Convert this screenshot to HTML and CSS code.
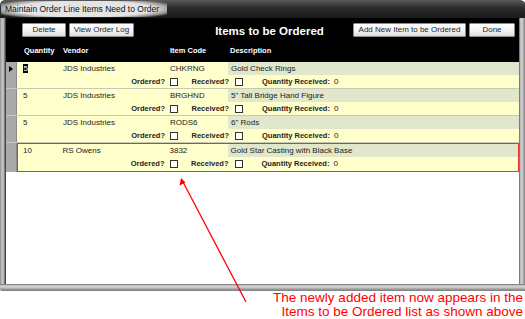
FILE: index.html
```html
<!DOCTYPE html>
<html>
<head>
<meta charset="utf-8">
<link rel="stylesheet" href="styles.css">
</head>
<body>
<div class="page">
  <div class="window">
    <div class="titlebar"><span class="title-glow">Maintain Order Line Items Need to Order</span></div>
    <div class="frame-mid">
      <div class="frame-left"></div>
      <div class="content">
        <div class="header">
          <div class="toolbar">
            <div class="btn-group">
              <button class="btn btn-delete">Delete</button>
              <button class="btn btn-log">View Order Log</button>
            </div>
            <div class="form-title">Items to be Ordered</div>
            <div class="btn-group">
              <button class="btn btn-add">Add New Item to be Ordered</button>
              <button class="btn btn-done">Done</button>
            </div>
          </div>
          <div class="col-heads">
            <span class="ch ch-qty">Quantity</span>
            <span class="ch ch-vendor">Vendor</span>
            <span class="ch ch-code">Item Code</span>
            <span class="ch ch-desc">Description</span>
          </div>
        </div>
        <div class="rows">
          <div class="row">
            <div class="selector"><span class="arrow"></span></div>
            <div class="rbody">
              <div class="line top">
                <span class="c-qty"><span class="sel">5</span></span>
                <span class="c-vendor">JDS Industries</span>
                <span class="c-code">CHKRNG</span>
                <span class="c-desc">Gold Check Rings</span>
              </div>
              <div class="line bottom">
                <span class="lbl l-ord">Ordered?</span><span class="cb"></span>
                <span class="lbl l-rec">Received?</span><span class="cb cb2"></span>
                <span class="lbl l-qr">Quantity Received:</span><span class="qr">0</span>
              </div>
            </div>
          </div>
          <div class="row">
            <div class="selector"></div>
            <div class="rbody">
              <div class="line top">
                <span class="c-qty">5</span>
                <span class="c-vendor">JDS Industries</span>
                <span class="c-code">BRGHND</span>
                <span class="c-desc">5" Tall Bridge Hand Figure</span>
              </div>
              <div class="line bottom">
                <span class="lbl l-ord">Ordered?</span><span class="cb"></span>
                <span class="lbl l-rec">Received?</span><span class="cb cb2"></span>
                <span class="lbl l-qr">Quantity Received:</span><span class="qr">0</span>
              </div>
            </div>
          </div>
          <div class="row">
            <div class="selector"></div>
            <div class="rbody">
              <div class="line top">
                <span class="c-qty">5</span>
                <span class="c-vendor">JDS Industries</span>
                <span class="c-code">RODS6</span>
                <span class="c-desc">6" Rods</span>
              </div>
              <div class="line bottom">
                <span class="lbl l-ord">Ordered?</span><span class="cb"></span>
                <span class="lbl l-rec">Received?</span><span class="cb cb2"></span>
                <span class="lbl l-qr">Quantity Received:</span><span class="qr">0</span>
              </div>
            </div>
          </div>
          <div class="row row-new">
            <div class="selector"></div>
            <div class="rbody highlight">
              <div class="line top">
                <span class="c-qty">10</span>
                <span class="c-vendor">RS Owens</span>
                <span class="c-code">3832</span>
                <span class="c-desc">Gold Star Casting with Black Base</span>
              </div>
              <div class="line bottom">
                <span class="lbl l-ord">Ordered?</span><span class="cb"></span>
                <span class="lbl l-rec">Received?</span><span class="cb cb2"></span>
                <span class="lbl l-qr">Quantity Received:</span><span class="qr">0</span>
              </div>
            </div>
          </div>
        </div>
        <div class="blank"></div>
      </div>
      <div class="frame-right"></div>
    </div>
    <div class="frame-bottom"></div>
  </div>
  <div class="note">The newly added item now appears in the<br>Items to be Ordered list as shown above</div>
  <svg class="pointer" width="525" height="319" viewBox="0 0 525 319">
    <line x1="246" y1="302" x2="183" y2="182" stroke="#ff0000" stroke-width="1.3"/>
    <polygon points="181,178 179.5,185.5 185.5,182.5" fill="#ff0000"/>
  </svg>
</div>
</body>
</html>
```

FILE: styles.css
```css
* { box-sizing: border-box; }
html, body { margin: 0; padding: 0; background: #fff; }
body { width: 525px; height: 319px; overflow: hidden; font-family: "Liberation Sans", Arial, sans-serif; }
.page { position: relative; width: 525px; height: 319px; }

.window { width: 526px; height: 291px; display: flex; flex-direction: column; }
.titlebar {
  height: 18px;
  background: linear-gradient(#5a5a5a, #2b2b2b 45%, #1a1a1a);
  border-top-left-radius: 5px; border-top-right-radius: 6px;
  display: flex; align-items: center; padding-left: 1px;
}
.title-glow {
  font-size: 8.5px; color: #111; padding: 3px 8px 3px 4px;
  background: radial-gradient(ellipse 60% 70% at center, #e4e4e4 70%, rgba(190,190,190,0.7) 88%, rgba(100,100,100,0) 100%);
  line-height: 10px;
}
.frame-mid { flex: 1; display: flex; min-height: 0; }
.frame-left { width: 6px; background: linear-gradient(90deg, #8a8a8a 0, #c8c8c8 2px, #b0b0b0 4px, #505050 5px, #3a3a3a 6px); }
.frame-right { width: 7px; background: linear-gradient(90deg, #404040 0, #b8b8b8 1px, #d0d0d0 3px, #9a9a9a 5px, #6a6a6a 7px); }
.frame-bottom { height: 7px; background: linear-gradient(#505050 0, #bcbcbc 1px, #d4d4d4 3px, #a0a0a0 5px, #7a7a7a 7px); border-bottom-left-radius: 2px; }

.content { flex: 1; display: flex; flex-direction: column; background: #fff; min-width: 0; }

.header { background: #000; height: 44px; display: flex; flex-direction: column; }
.toolbar { display: flex; align-items: center; justify-content: space-between; padding: 5px 4px 0 16px; height: 19px; }
.btn-group { display: flex; gap: 3px; }
.btn {
  font-family: "Liberation Sans", Arial, sans-serif; font-size: 8px; color: #222;
  height: 14px; padding: 0; margin: 0;
  background: linear-gradient(#ffffff, #f2f2f2 60%, #dedede);
  border: 1px solid #8c8c8c; border-radius: 1px;
  line-height: 12px;
}
.btn-delete { width: 44px; }
.btn-log { width: 65px; }
.btn-add { width: 113px; }
.btn-done { width: 46px; }
.form-title { color: #fff; font-weight: bold; font-size: 11.5px; margin-left: 52px; margin-top: 2px; }

.col-heads { position: relative; height: 25px; color: #fff; font-weight: bold; font-size: 7.5px; display: flex; align-items: center; padding-top: 2px; }
.ch { display: inline-block; }
.ch-qty { margin-left: 18px; width: 39px; }
.ch-vendor { width: 107px; }
.ch-code { width: 60px; }

.rows { display: flex; flex-direction: column; }
.row { display: flex; height: 27px; border-bottom: 1px solid #c9c9b8; }
.row-new { height: 29px; border-bottom: none; }
.selector { width: 11px; background: #a9a9a9; border-right: 1px solid #8c8c8c; position: relative; }
.arrow { position: absolute; left: 3px; top: 4px; width: 0; height: 0; border-top: 3.5px solid transparent; border-bottom: 3.5px solid transparent; border-left: 4px solid #000; }
.rbody { flex: 1; background: #ffffcc; display: flex; flex-direction: column; font-size: 8px; color: #222; }
.highlight { border: 1.5px solid #ee3030; }
.line { display: flex; align-items: center; height: 13px; }
.top .c-qty { width: 46px; padding-left: 6px; }
.top .c-vendor { width: 107px; }
.top .c-code { width: 58px; }
.top .c-desc { flex: 1; background: #e0e7cb; align-self: stretch; display: flex; align-items: center; padding-left: 3px; }
.highlight .top .c-qty { width: 44.5px; padding-left: 5px; }
.sel { background: #000; color: #fff; padding: 0 0.5px; }
.bottom { font-weight: bold; }
.lbl { display: inline-block; font-size: 7.5px; }
.l-ord { width: 148px; text-align: right; }
.l-rec { width: 51px; text-align: right; }
.l-qr { margin-left: 19px; width: 72px; }
.cb { width: 8px; height: 8px; border: 1px solid #333; background: #fff; margin-left: 5px; }
.cb2 { margin-left: 6px; }
.qr { font-weight: normal; }
.highlight .l-ord { width: 146.5px; }

.blank { flex: 1; background: #fff; }

.note { position: absolute; right: 2px; top: 291px; color: #ff0000; font-size: 13.5px; line-height: 14px; text-align: right; }
.pointer { position: absolute; left: 0; top: 0; pointer-events: none; }
```
